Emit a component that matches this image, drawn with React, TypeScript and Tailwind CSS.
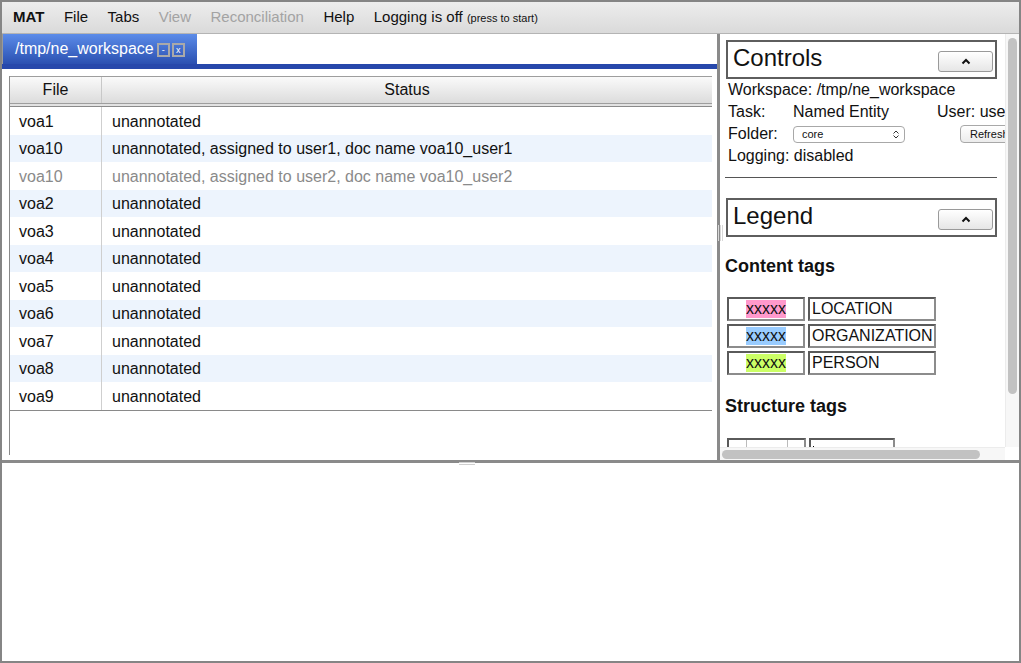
const rows = [
  { file: 'voa1', status: 'unannotated' },
  { file: 'voa10', status: 'unannotated, assigned to user1, doc name voa10_user1' },
  { file: 'voa10', status: 'unannotated, assigned to user2, doc name voa10_user2', dim: true },
  { file: 'voa2', status: 'unannotated' },
  { file: 'voa3', status: 'unannotated' },
  { file: 'voa4', status: 'unannotated' },
  { file: 'voa5', status: 'unannotated' },
  { file: 'voa6', status: 'unannotated' },
  { file: 'voa7', status: 'unannotated' },
  { file: 'voa8', status: 'unannotated' },
  { file: 'voa9', status: 'unannotated' },
];

const contentTags = [
  { name: 'LOCATION', color: 'bg-[#ff99cc]' },
  { name: 'ORGANIZATION', color: 'bg-[#99ccff]' },
  { name: 'PERSON', color: 'bg-[#ccff66]' },
];

const CaretButton = () => (
  <button className="mt-[4px] mr-[2px] flex h-[21px] w-[55px] items-center justify-center rounded-[3px] border border-[#9a9a9a] bg-gradient-to-b from-white to-[#e6e6e6]">
    <svg width="10" height="7" viewBox="0 0 10 7">
      <path d="M1.5 5.5 L5 2 L8.5 5.5" fill="none" stroke="#111" strokeWidth="2" />
    </svg>
  </button>
);

const TagRow = ({ name, color }: { name: string; color: string }) => (
  <div className="flex gap-[3px]">
    <div className="flex h-[24px] w-[78px] items-center justify-center border-2 border-t-[#5a5a5a] border-l-[#5a5a5a] border-b-[#8c8c8c] border-r-[#8c8c8c]">
      <span className={`${color} leading-[18px]`}>xxxxx</span>
    </div>
    <div className="flex h-[24px] w-[128px] items-center border-2 border-t-[#5a5a5a] border-l-[#5a5a5a] border-b-[#8c8c8c] border-r-[#8c8c8c] pl-[2px]">
      {name}
    </div>
  </div>
);

export default function App() {
  return (
    <div
      className="flex h-[663px] w-[1021px] flex-col overflow-hidden border-2 border-[#858585] bg-white text-[#111]"
      style={{ fontFamily: '"Liberation Sans", Arial, sans-serif' }}
    >
      {/* Menu bar */}
      <div className="flex h-[32px] shrink-0 items-center gap-[19.5px] border-b border-[#b4b4b4] bg-gradient-to-b from-[#ededed] to-[#dadada] pl-[11px] text-[15px]">
        <span className="font-bold">MAT</span>
        <span>File</span>
        <span>Tabs</span>
        <span className="text-[#a3a3a3]">View</span>
        <span className="text-[#a3a3a3]">Reconciliation</span>
        <span>Help</span>
        <span>
          Logging is off <span className="text-[11px]">(press to start)</span>
        </span>
      </div>

      {/* Top pane */}
      <div className="flex h-[426px] shrink-0">
        {/* Left pane */}
        <div className="flex w-[715px] shrink-0 flex-col">
          <div className="flex h-[30px] shrink-0 bg-white">
            <div className="w-[1px] bg-[#9a9a9a]" />
            <div className="flex items-center bg-gradient-to-b from-[#5c8ce9] to-[#2b50b1] pl-[12px] pr-[12px] text-[16px] text-white">
              <span>/tmp/ne_workspace</span>
              <span className="ml-[3px] mt-[2px] flex h-[14px] w-[13px] items-center justify-center border-2 border-[#a9a9a9] text-[9px] leading-none">-</span>
              <span className="ml-[2px] mt-[2px] flex h-[14px] w-[13px] items-center justify-center border-2 border-[#a9a9a9] text-[9px] leading-none">x</span>
            </div>
          </div>
          <div className="h-[5px] shrink-0 bg-[#2748ab]" />
          <div className="flex flex-1 flex-col pb-[5px] pl-[7px] pr-[5px] pt-[7px]">
            <div className="flex flex-1 flex-col border-l border-[#8a8a8a] text-[16px]">
              <div className="flex h-[28px] shrink-0 border-t border-b border-[#9e9e9e] bg-gradient-to-b from-[#fafafa] to-[#dcdcdc]">
                <div className="flex w-[92px] items-center justify-center border-r border-[#c8c8c8]">File</div>
                <div className="flex flex-1 items-center justify-center">Status</div>
              </div>
              <div className="h-[2px] shrink-0 bg-[#e2e2e2]" />
              <div className="border-t border-b border-[#8a8a8a]">
                {rows.map((r, i) => (
                  <div
                    key={i}
                    className={`flex h-[27.5px] ${i % 2 === 1 ? 'bg-[#edf4fd]' : 'bg-white'} ${r.dim ? 'text-[#8a8a8a]' : ''}`}
                  >
                    <div className="flex w-[92px] items-center border-r border-[#cfcfcf] pl-[9px] pt-[2px]">{r.file}</div>
                    <div className="flex flex-1 items-center pl-[10px] pt-[2px]">{r.status}</div>
                  </div>
                ))}
              </div>
            </div>
          </div>
        </div>

        {/* Vertical splitter */}
        <div className="relative w-[3px] shrink-0 bg-[#8a8a8a]">
          <div className="absolute left-[1px] top-[191px] flex h-[16px] gap-[1px]">
            <div className="w-[1px] bg-[#d8d8d8]" />
            <div className="w-[1px] bg-[#d8d8d8]" />
            <div className="w-[1px] bg-[#d8d8d8]" />
          </div>
        </div>

        {/* Right pane */}
        <div className="flex min-w-0 flex-1 flex-col bg-white">
          <div className="flex h-[413px] shrink-0">
            <div className="min-w-0 flex-1 overflow-hidden">
              <div className="w-[320px] pl-[6px] text-[16px]">
                <div className="mt-[6px] flex h-[39px] w-[271px] items-center justify-between border-2 border-[#5e5e5e] pl-[5px]">
                  <span className="-mt-[4px] text-[24px]">Controls</span>
                  <CaretButton />
                </div>
                <div className="pl-[2px] leading-[22px]">
                  <div className="whitespace-nowrap">Workspace: /tmp/ne_workspace</div>
                  <div className="flex whitespace-nowrap">
                    <span className="w-[65px]">Task:</span>
                    <span className="w-[144px]">Named Entity</span>
                    <span>User: user1</span>
                  </div>
                  <div className="flex items-center whitespace-nowrap">
                    <span className="w-[65px]">Folder:</span>
                    <div className="flex h-[17px] w-[112px] shrink-0 items-center justify-between rounded-[4px] border border-[#a8a8a8] bg-white pl-[8px] pr-[5px] text-[11px] leading-none">
                      <span>core</span>
                      <svg width="6" height="9" viewBox="0 0 6 9">
                        <path d="M0.5 3.5 L3 1 L5.5 3.5 M0.5 5.5 L3 8 L5.5 5.5" fill="none" stroke="#333" strokeWidth="1" />
                      </svg>
                    </div>
                    <div className="ml-[55px] flex h-[18px] shrink-0 items-center rounded-[4px] border border-[#a8a8a8] bg-gradient-to-b from-white to-[#ececec] px-[9px] text-[11px] leading-none">
                      Refresh
                    </div>
                  </div>
                  <div className="whitespace-nowrap">Logging: disabled</div>
                </div>
                <div className="mt-[10px] h-[1px] w-[272px] -translate-x-[1px] bg-[#555]" />
                <div className="mt-[20px] flex h-[39px] w-[271px] items-center justify-between border-2 border-[#5e5e5e] pl-[5px]">
                  <span className="-mt-[4px] text-[24px]">Legend</span>
                  <CaretButton />
                </div>
                <div className="mt-[19px] -ml-[1px] text-[18px] font-bold leading-[21px]">Content tags</div>
                <div className="mt-[20px] flex flex-col gap-[3px] pl-[1px]">
                  {contentTags.map((t) => (
                    <TagRow key={t.name} name={t.name} color={t.color} />
                  ))}
                </div>
                <div className="mt-[21px] -ml-[1px] text-[18px] font-bold leading-[21px]">Structure tags</div>
                <div className="mt-[21px] flex gap-[3px] pl-[1px]">
                  <div className="flex h-[24px] w-[79px] border-2 border-t-[#5a5a5a] border-l-[#5a5a5a] border-b-[#8c8c8c] border-r-[#8c8c8c]">
                    <div className="ml-[17px] w-[42px] border-x border-[#bbb]" />
                  </div>
                  <div className="h-[24px] w-[86px] border-2 border-t-[#5a5a5a] border-l-[#5a5a5a] border-b-[#8c8c8c] border-r-[#8c8c8c] pl-[2px] text-[16px]">
                    <span className="inline-block h-[14px] w-[1px] bg-black align-middle" />
                  </div>
                </div>
              </div>
            </div>
            {/* vertical scrollbar */}
            <div className="flex w-[14px] shrink-0 justify-center border-l border-[#ececec] bg-[#f7f7f7] pt-[4px]">
              <div className="h-[356px] w-[9px] rounded-full bg-[#c2c2c2]" />
            </div>
          </div>
          {/* horizontal scrollbar */}
          <div className="flex h-[13px] shrink-0">
            <div className="flex flex-1 items-center border-t border-[#ececec] bg-[#f7f7f7] pl-[2px]">
              <div className="h-[9px] w-[258px] rounded-full bg-[#c2c2c2]" />
            </div>
            <div className="w-[14px] bg-white" />
          </div>
        </div>
      </div>

      {/* Horizontal splitter */}
      <div className="relative h-[3px] shrink-0 bg-[#8a8a8a]">
        <div className="absolute left-[457px] top-[2px] flex w-[16px] flex-col gap-[1px]">
          <div className="h-[1px] bg-[#cfcfcf]" />
          <div className="h-[1px] bg-[#cfcfcf]" />
        </div>
      </div>

      {/* Bottom pane */}
      <div className="flex-1 bg-white" />
    </div>
  );
}
